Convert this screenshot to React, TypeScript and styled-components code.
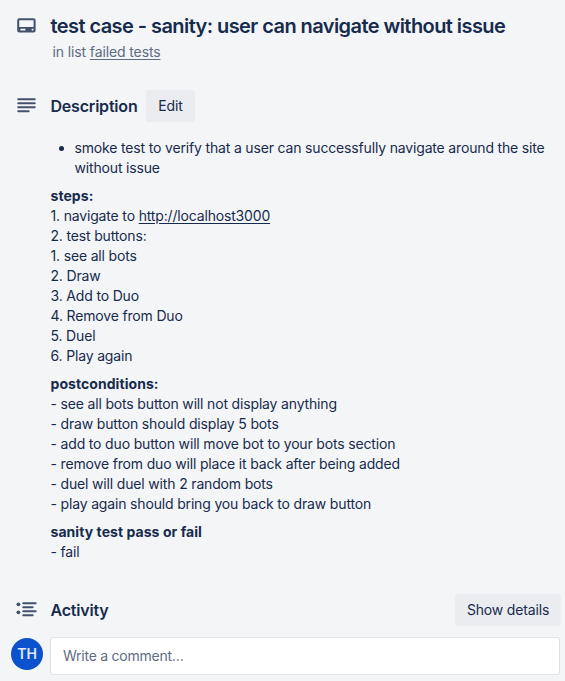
import React from "react";
import styled, { createGlobalStyle } from "styled-components";

const Global = createGlobalStyle`
  * { box-sizing: border-box; }
  body { margin: 0; background: #f4f5f7; color: #172b4d; font: 14px/20px Inter, "Liberation Sans", sans-serif; letter-spacing: -0.165px; overflow: hidden; }
`;
const Card = styled.main`width: 565px; height: 681px; overflow: hidden;`;
const Row = styled.div<{ $h: number; $mt: number }>`
  display: grid;
  grid-template-columns: 50.5px auto 1fr;
  align-items: center;
  height: ${p => p.$h}px;
  margin-top: ${p => p.$mt}px;
`;
const Icon = styled.svg`
  display: block;
  margin-left: 16px;
  width: 22px;
  height: 20px;
  color: #42526e;
`;
const Title = styled.h1`
  margin: 0;
  font-size: 20px;
  line-height: 24px;
  font-weight: 600;
  letter-spacing: -0.57px;
  white-space: nowrap;
`;
const Sub = styled.p`margin: 4px 0 0 52.5px; height: 20px; color: #5e6c84; letter-spacing: -0.12px;`;
const Heading = styled.h2`
  margin: 0;
  font-size: 16px;
  line-height: 20px;
  font-weight: 600;
  letter-spacing: -0.2px;
  white-space: nowrap;
`;
const Button = styled.button<{ $w: number; $end?: boolean }>`
  width: ${p => p.$w}px;
  height: 32px;
  margin: 0 4px 0 8.5px;
  padding: 0;
  border: 0;
  border-radius: 3px;
  background: #eaecf0;
  color: #172b4d;
  font: inherit;
  letter-spacing: inherit;
  justify-self: ${p => (p.$end ? "end" : "start")};
`;
const Body = styled.section`margin: 16px 0 0 50.5px;`;
const List = styled.ul`margin: 0 0 8px; padding-left: 24px;`;
const Para = styled.div`margin: 0 0 8px; white-space: nowrap;`;
const Label = styled.div`font-weight: 700; letter-spacing: 0.06px;`;
const Line = styled.div`height: 20px;`;
const Link = styled.a`color: inherit; text-decoration: underline; text-underline-offset: 2px;`;
const Comment = styled.div`display: flex; margin: 11px 5px 0 11px;`;
const Avatar = styled.div`
  width: 32px;
  height: 32px;
  margin-top: 1px;
  border-radius: 50%;
  background: #0c52cc;
  color: #dfe9fb;
  font-weight: 600;
  line-height: 32px;
  text-align: center;
`;
const Field = styled.div`
  flex: 1;
  margin-left: 7px;
  height: 38px;
  padding: 8px 12px;
  border: 1px solid #dfe1e6;
  border-radius: 3px;
  background: #fff;
  color: #5e6c84;
  letter-spacing: -0.25px;
`;

const CardIcon = () => (
  <Icon viewBox="0 0 22 20">
    <path
      fill="currentColor"
      fillRule="evenodd"
      d="M3.2 2.2h14.4a2 2 0 0 1 2 2v10.4a2 2 0 0 1-2 2H3.2a2 2 0 0 1-2-2V4.200a2 2 0 0 1 2-2ZM3.200 4.200V11h14.400V4.200ZM4.400 12.700v1.700h5v-1.700ZM15.700 12.700v1.700h1.700v-1.700Z"
    />
  </Icon>
);
const TextIcon = () => (
  <Icon viewBox="0 0 22 20" stroke="currentColor" strokeWidth="1.9" strokeLinecap="round">
    <path d="M2.200 3.300h16.600M2.200 7.300h16.600M2.200 11.300h16.600M2.200 15.300h10.500" />
  </Icon>
);
const ActivityIcon = () => (
  <Icon viewBox="0 0 22 20" stroke="currentColor" strokeWidth="1.9" strokeLinecap="round">
    <path d="M7.200 3.300h12.500M7.200 7.300h9.500M7.200 11.300h12.500M7.200 15.300h9.500" />
    <circle cx="2.400" cy="4.300" r="1.900" fill="currentColor" stroke="none" />
    <circle cx="2.400" cy="12.300" r="1.900" fill="currentColor" stroke="none" />
  </Icon>
);

const steps = ["2. test buttons:", "1. see all bots", "2. Draw", "3. Add to Duo", "4. Remove from Duo", "5. Duel", "6. Play again"];
const postconditions = [
  "- see all bots button will not display anything",
  "- draw button should display 5 bots",
  "- add to duo button will move bot to your bots section",
  "- remove from duo will place it back after being added",
  "- duel will duel with 2 random bots",
  "- play again should bring you back to draw button",
];

export default function App() {
  return (
    <Card>
      <Global />
      <Row $h={24} $mt={14}>
        <CardIcon />
        <Title>test case - sanity: user can navigate without issue</Title>
      </Row>
      <Sub>in list <Link>failed tests</Link></Sub>
      <Row $h={32} $mt={28}>
        <TextIcon />
        <Heading>Description</Heading>
        <Button $w={49}>Edit</Button>
      </Row>
      <Body>
        <List>
          <li>smoke test to verify that a user can successfully navigate around the site without issue</li>
        </List>
        <Para>
          <Label>steps:</Label>
          <Line>1. navigate to <Link>http://localhost3000</Link></Line>
          {steps.map(s => <Line key={s}>{s}</Line>)}
        </Para>
        <Para>
          <Label>postconditions:</Label>
          {postconditions.map(s => <Line key={s}>{s}</Line>)}
        </Para>
        <Para>
          <Label>sanity test pass or fail</Label>
          <Line>- fail</Line>
        </Para>
      </Body>
      <Row $h={32} $mt={32}>
        <ActivityIcon />
        <Heading>Activity</Heading>
        <Button $w={106} $end>Show details</Button>
      </Row>
      <Comment>
        <Avatar>TH</Avatar>
        <Field>Write a comment…</Field>
      </Comment>
    </Card>
  );
}
